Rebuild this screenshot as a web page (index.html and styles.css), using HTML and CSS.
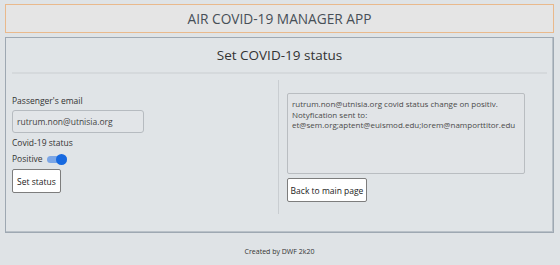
FILE: index.html
```html
<!DOCTYPE html>
<html>
<head>
<meta charset="utf-8">
<link rel="stylesheet" href="styles.css">
</head>
<body>
<header class="app-header">AIR COVID-19 MANAGER APP</header>
<main class="card">
  <h1 class="card-title">Set COVID-19 status</h1>
  <div class="rule"></div>
  <div class="row">
    <div class="col col-left">
      <label class="label">Passenger's email</label>
      <div class="input">rutrum.non@utnisia.org</div>
      <div class="label label-status">Covid-19 status</div>
      <div class="switch-row">
        <span>Positive</span>
        <span class="switch"><span class="knob"></span></span>
      </div>
      <button class="btn btn-set">Set status</button>
    </div>
    <div class="col col-right">
      <div class="textarea">rutrum.non@utnisia.org covid status change on positiv.<br>Notyfication sent to:<br>et@sem.org;aptent@euismod.edu;lorem@namporttitor.edu</div>
      <button class="btn btn-back">Back to main page</button>
    </div>
  </div>
</main>
<footer class="footer">Created by DWF 2k20</footer>
</body>
</html>
```
FILE: styles.css
```css
html, body {
  margin: 0;
  background: #dfe3e6;
}
body {
  padding: 4px 6px 0 5px;
  font-family: "Open Sans", "Noto Sans", sans-serif;
  color: #3a3a3a;
}
.app-header {
  height: 27px;
  border: 1px solid #e9b98c;
  background: #e5e5e5;
  text-align: center;
  font-size: 13.7px;
  line-height: 27px;
  color: #474f57;
}
.card {
  margin-top: 4px;
  height: 194px;
  border: 1px solid #9ea8b2;
  box-shadow: inset -1px -1px 0 #b9c1c8;
  background: #e0e4e7;
  padding: 0 6px;
}
.card-title {
  margin: 0;
  padding-top: 7px;
  font-size: 13.5px;
  font-weight: normal;
  line-height: 20px;
  text-align: center;
  color: #333;
}
.rule {
  margin: 7px 0 0;
  border-top: 2px solid #d5d9dc;
}
.row {
  display: grid;
  grid-template-columns: 267px 1fr;
  margin-top: 6px;
  height: 134px;
}
.col-left {
  border-right: 1px solid #c9cdd1;
  padding: 15px 0 0 0;
  display: flex;
  flex-direction: column;
  align-items: flex-start;
  font-size: 8.5px;
}
.label {
  line-height: 12px;
  color: #333;
}
.input {
  margin-top: 3px;
  box-sizing: border-box;
  width: 132px;
  height: 23px;
  border: 1px solid #b6bbc0;
  border-radius: 3px;
  background: #e2e5e8;
  padding-left: 4px;
  line-height: 21px;
  font-size: 8.5px;
  color: #444;
}
.label-status {
  margin-top: 4px;
}
.switch-row {
  margin-top: 4px;
  display: flex;
  align-items: center;
  gap: 4px;
  line-height: 12px;
  color: #333;
}
.switch {
  position: relative;
  width: 20px;
  height: 7px;
  border-radius: 4px;
  background: #7ba6e6;
  margin-top: 1px;
}
.knob {
  position: absolute;
  right: 0;
  top: -2px;
  width: 11px;
  height: 11px;
  border-radius: 50%;
  background: #1769e0;
}
.btn {
  font-family: "Open Sans", "Noto Sans", sans-serif;
  font-size: 8.5px;
  background: #fff;
  border: 1px solid #7d7d7d;
  border-radius: 2px;
  color: #222;
  padding: 0;
  height: 24px;
}
.btn-set {
  margin-top: 4px;
  width: 49px;
}
.col-right {
  padding: 13px 0 0 8px;
  display: flex;
  flex-direction: column;
  align-items: flex-start;
}
.textarea {
  box-sizing: border-box;
  width: 238px;
  height: 81px;
  border: 1px solid #b9bdc1;
  border-radius: 2px;
  background: #e1e4e7;
  padding: 5px 4px;
  font-size: 8px;
  line-height: 10.5px;
  color: #4a4a4a;
}
.btn-back {
  margin-top: 4px;
  width: 80px;
  height: 24px;
}
.footer {
  text-align: center;
  font-size: 7px;
  line-height: 10px;
  margin-top: 14px;
  color: #333;
}
```
